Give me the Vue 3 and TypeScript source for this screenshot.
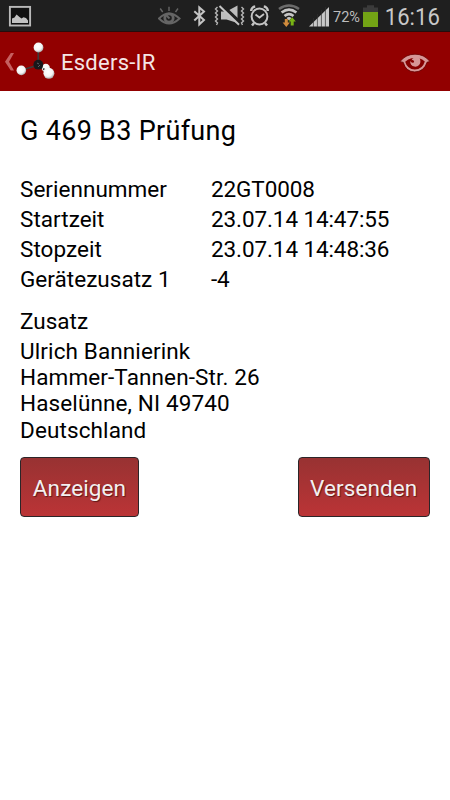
<script setup lang="ts">
interface Row {
  label: string
  value: string
}

const rows: Row[] = [
  { label: 'Seriennummer', value: '22GT0008' },
  { label: 'Startzeit', value: '23.07.14 14:47:55' },
  { label: 'Stopzeit', value: '23.07.14 14:48:36' },
  { label: 'Gerätezusatz 1', value: '-4' },
]

const address: string[] = [
  'Ulrich Bannierink',
  'Hammer-Tannen-Str. 26',
  'Haselünne, NI 49740',
  'Deutschland',
]
</script>

<template>
  <div class="screen">
    <header class="status">
      <svg class="picture" width="24" height="24" viewBox="0 0 24 24">
        <rect x="1.900" y="1.900" width="20.200" height="18.600" fill="#111" stroke="#b9b9b9" stroke-width="1.900" />
        <path d="M4 18V13.500l2.500-1 2-3 3 2.500 2 1.500 2-1.300 2.500.8 2 2.500V18z" fill="#c2c2c2" />
      </svg>
      <div class="spacer"></div>
      <svg width="292" height="31" viewBox="158 0 292 31" class="indicators">
        <g fill="none" stroke="#656565">
          <path d="M159 18.500Q169 8.500 179.500 18.500Q169 28.500 159 18.500z" stroke-width="2" />
          <circle cx="169" cy="18" r="4.200" stroke-width="2.800" />
          <path d="M169 6.800v4.200M160.200 8.500l2.500 3.500M178 8.500l-2.500 3.500" stroke-width="1.400" />
          <path d="M166.500 15.500l3 3" stroke-width="2" />
        </g>
        <path d="M194.300 11.200l9.700 8.800-4.700 4.400V7.400L204 11.500l-9.700 9" fill="none" stroke="#c4c4c4" stroke-width="2" />
        <g>
          <path d="M221 11.500h5.500L237.500 5.500V23l-11-3.500H221z" fill="#bcbcbc" />
          <path d="M220.800 4.800L240.500 23.500" stroke="#1f1f1f" stroke-width="4.400" />
          <path d="M219.500 6L239 24.800" stroke="#c4c4c4" stroke-width="2" />
          <path d="M217.500 7l-2 2 2 2-2 2 2 2-2 2 2 2-2 2 2 2-1 2M241.500 7l2 2-2 2 2 2-2 2 2 2-2 2 2 2-2 2 1 2" fill="none" stroke="#b4b4b4" stroke-width="1.400" />
        </g>
        <g fill="none" stroke="#c4c4c4" stroke-width="2">
          <circle cx="259.500" cy="16.500" r="7.900" />
          <path d="M255.500 14.500l4 3 4.500-3.500" stroke-width="1.800" />
          <path d="M251.200 11a4.500 4.500 0 0 1 4-4.500M267.800 11a4.500 4.500 0 0 0-4-4.500M254 23l-2 2.500M265 23l2 2.500" stroke-width="2.500" />
        </g>
        <g fill="none" stroke-width="2.600">
          <path d="M279 9Q289 2 299 9" stroke="#6b6b6b" />
          <path d="M281.600 12.600Q289 6.500 296.400 12.600" stroke="#c5c5c5" />
          <path d="M284.500 16Q289 12.300 293.500 16" stroke="#c5c5c5" />
        </g>
        <path d="M286.500 18q2.500-2 5 0L289 20.500z" fill="#c5c5c5" />
        <path d="M284.800 19h3v3.500h2.200l-3.700 4.500-3.700-4.500h2.200z" fill="#d18c3d" />
        <path d="M290.700 25.500v-4h-2.200l3.700-4.300 3.700 4.300h-2.200v4z" fill="#78b414" />
        <path d="M309 26.500L329 7v19.500z" fill="#c8c8c8" />
        <path d="M313.400 18v9M317.400 14v13M321.400 10v17M325.400 7v20" stroke="#303030" stroke-width=".7" />
        <text x="333" y="21.700" class="pct" textLength="27" lengthAdjust="spacingAndGlyphs">72%</text>
        <path d="M363 12V7.500h4V5.300h7v2.200h4V12z" fill="#3b3b3b" />
        <rect x="363" y="12" width="15" height="15" fill="#73a315" />
        <text x="384.800" y="25" class="clock" textLength="55" lengthAdjust="spacingAndGlyphs">16:16</text>
      </svg>
    </header>

    <div class="bar">
      <svg class="logo" width="56" height="50" viewBox="0 0 56 50">
        <defs>
          <radialGradient id="ball" cx=".43" cy=".38" r=".62">
            <stop offset="0" stop-color="#fff" />
            <stop offset=".65" stop-color="#f4f4f4" />
            <stop offset="1" stop-color="#aaa" />
          </radialGradient>
        </defs>
        <path d="M10.800 17h3.200L9 25.800l5 8.800h-3.200L5 25.800z" fill="#c66060" />
        <path d="M38.300 14v13M38.300 29L22 34M39 29l9 7" stroke="#3c3c3c" stroke-width="1.700" />
        <circle cx="45.800" cy="32" r="4.200" fill="url(#ball)" />
        <path d="M41 31.500l5 3" stroke="#222" stroke-width="1.600" stroke-dasharray="1.500 1" />
        <circle cx="38.300" cy="28.700" r="4.900" fill="#17181b" />
        <path d="M37 27l2 1M38 31l2-2" stroke="#62646b" stroke-width=".9" />
        <circle cx="38.500" cy="11.500" r="4.900" fill="url(#ball)" />
        <circle cx="21.300" cy="34.400" r="4.800" fill="url(#ball)" />
        <circle cx="48.900" cy="37.300" r="5.500" fill="url(#ball)" />
      </svg>
      <h1>Esders-IR</h1>
      <svg class="eye" width="32" height="24" viewBox="0 0 32 24">
        <path d="M1.500 10Q7 3.200 16 3.200T30.500 10q.4 1.200-2.300 1.100Q25 20.900 15.700 20.900 6.800 20.900 4.200 11.300 1 11.300 1.500 10z" fill="#d69797" stroke="#670000" stroke-width=".8" />
        <path d="M6.200 10.800Q9 8 12.500 7.300H20q3.500.8 5.800 3.200-2.300 7.900-10 7.900-7.500 0-9.600-7.600z" fill="#850000" />
        <path d="M15.500 6.500h5q2 5-.4 7.500-1.800 1.900-4.600 1.600-4.500-.7-4.300-5.600 1.200 2.200 3 1.700 1.700-.6.600-1.900-1-1.200-2.300-.5Q13.500 7 15.500 6.500z" fill="#d69797" />
      </svg>
    </div>

    <main>
      <h2>G 469 B3 Prüfung</h2>
      <dl>
        <div v-for="row in rows" :key="row.label" class="row">
          <dt>{{ row.label }}</dt>
          <dd>{{ row.value }}</dd>
        </div>
      </dl>
      <section>
        <h3>Zusatz</h3>
        <p v-for="line in address" :key="line">{{ line }}</p>
      </section>
      <div class="actions">
        <button type="button" class="show">Anzeigen</button>
        <button type="button" class="send">Versenden</button>
      </div>
    </main>
  </div>
</template>

<style>
body {
  margin: 0;
  background: #fff;
}
</style>

<style scoped>
.screen {
  width: 450px;
  height: 800px;
  background: #fff;
  color: #000;
  font-family: Roboto, "Liberation Sans", sans-serif;
  overflow: hidden;
}
.status {
  display: flex;
  height: 31px;
  background: #1f1f1f;
}
.picture {
  margin: 5px 0 0 8px;
}
.spacer {
  flex: 1;
}
.pct {
  font-size: 14.5px;
  fill: #bdbdbd;
}
.clock {
  font-size: 23.5px;
  fill: #c8c8c8;
}
.bar {
  display: flex;
  align-items: center;
  box-sizing: border-box;
  height: 60px;
  padding-right: 19px;
  background: #920000;
  border-top: 1px solid #250c0c;
}
.logo {
  margin-bottom: 2px;
}
h1 {
  flex: 1;
  margin: 2px 0 0 5px;
  font-size: 22px;
  font-weight: 400;
  letter-spacing: 0.25px;
  line-height: 30px;
  color: #f4e6e6;
}
.eye {
  margin-top: 2px;
}
main {
  padding: 25px 20px 0;
  font-size: 22.5px;
}
h2 {
  margin: 0 0 28px;
  font-size: 27px;
  font-weight: 400;
  letter-spacing: 0.3px;
  line-height: 30px;
}
dl {
  margin: 0 0 14px;
}
.row {
  display: grid;
  grid-template-columns: 191px 1fr;
  line-height: 30px;
}
dt {
  letter-spacing: 0.03px;
}
dd {
  margin: 0;
  letter-spacing: -0.1px;
}
h3 {
  margin: 0 0 3.5px;
  font-size: 22.5px;
  font-weight: 400;
  line-height: 26.3px;
}
p {
  margin: 0;
  letter-spacing: 0.12px;
  line-height: 26.3px;
}
.actions {
  display: flex;
  justify-content: space-between;
  margin-top: 14px;
}
button {
  box-sizing: border-box;
  height: 60px;
  padding: 2px 0 0;
  border: 1px solid #2b2528;
  border-radius: 4px;
  background: linear-gradient(#983232, #bb3436);
  color: #f3f0f0;
  font: 22.5px Roboto, "Liberation Sans", sans-serif;
  letter-spacing: 0.1px;
  text-shadow: 1px 1px 1px #601818;
}
.show {
  width: 119px;
}
.send {
  width: 132.5px;
}
</style>
